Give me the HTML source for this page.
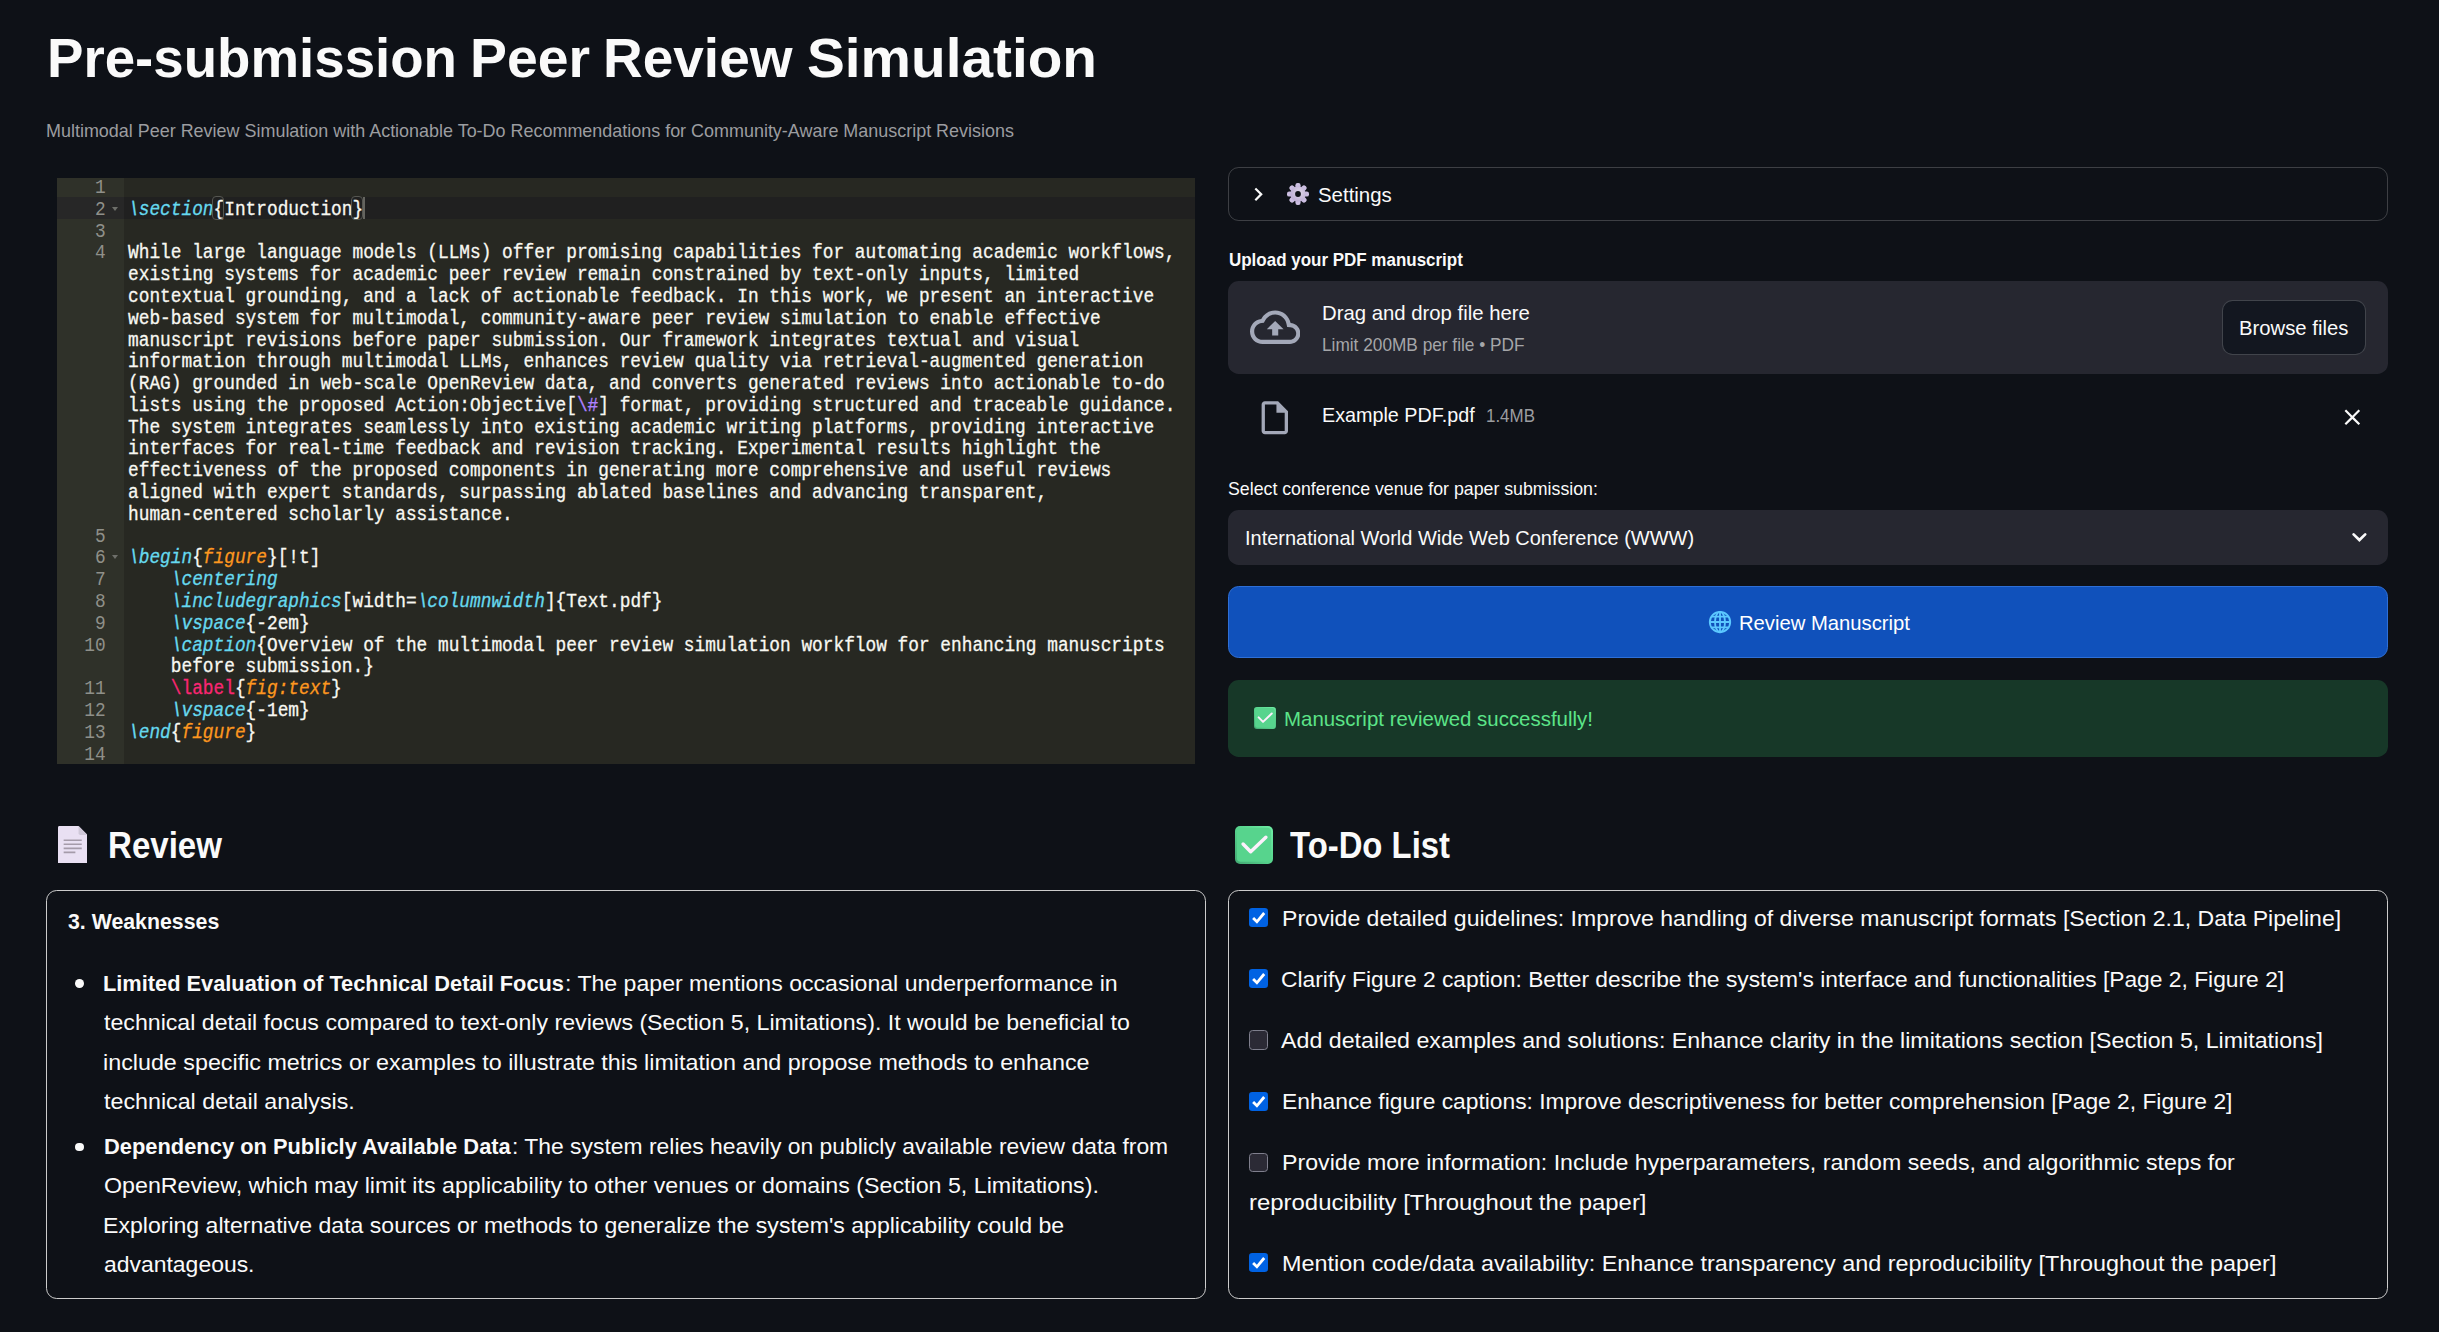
<!DOCTYPE html>
<html lang="en"><head><meta charset="utf-8"><title>Pre-submission Peer Review Simulation</title>
<style>
html,body{margin:0;padding:0;background:#0e1117;}
body{width:2439px;height:1332px;position:relative;overflow:hidden;font-family:"Liberation Sans",sans-serif;color:#fafafa;}
h1,h3,h4,p,ul,li,label,small,strong,header,main,section{margin:0;padding:0;font:inherit;list-style:none;display:block;}
.ab{position:absolute;display:block;}
.t{position:absolute;white-space:nowrap;transform-origin:0 50%;font-family:"Liberation Sans",sans-serif;}
.box{position:absolute;box-sizing:border-box;border-radius:10.67px;}
.ed{position:absolute;background:#272822;overflow:hidden;font-family:"Liberation Mono",monospace;font-size:19.6px;line-height:21.79px;color:#f8f8f2;}
.gut{position:absolute;left:0;top:0;bottom:0;background:#2f3129;}
.al{position:absolute;left:0;right:0;background:#202020;}
.alg{position:absolute;left:0;background:#272727;}
.ln{position:absolute;left:0;width:48.6px;text-align:right;color:#8f908a;transform-origin:100% 50%;transform:scaleX(0.9090);white-space:pre;}
.fold{position:absolute;left:54.8px;width:0;height:0;border-left:3.2px solid transparent;border-right:3.2px solid transparent;border-top:4.2px solid #6e6f6a;}
.code{position:absolute;top:0;width:1400px;height:100%;transform-origin:0 0;}
.cl{position:absolute;left:0;white-space:pre;-webkit-text-stroke:0.3px currentColor;}
.bs{display:inline-block;transform:skewX(-11deg);}
.bk{position:absolute;box-sizing:border-box;border:1.33px solid #555651;border-radius:4px;}
.cur{position:absolute;background:#64645f;}
.cb{position:absolute;box-sizing:border-box;width:19.2px;height:19.2px;border-radius:3.2px;}
.cb.on{background:#0062e3;}
.cb.on svg{display:block;}
.cb.off{background:#2b2a35;border:1.33px solid #7f7f8d;border-radius:3.6px;}
.bul{position:absolute;width:8.8px;height:8.8px;border-radius:50%;background:#fafafa;}
</style></head><body>
<header>
<h1><span class="t" style="left:46.75px;top:21.80px;font-size:55.6px;line-height:72.28px;font-weight:700;color:#fafafa;transform:scaleX(0.9830);">Pre-submission</span><span class="t" style="left:470.21px;top:21.80px;font-size:55.6px;line-height:72.28px;font-weight:700;color:#fafafa;transform:scaleX(0.9957);">Peer</span><span class="t" style="left:603.33px;top:21.80px;font-size:55.6px;line-height:72.28px;font-weight:700;color:#fafafa;transform:scaleX(0.9889);">Review</span><span class="t" style="left:806.78px;top:21.80px;font-size:55.6px;line-height:72.28px;font-weight:700;color:#fafafa;transform:scaleX(1.0204);">Simulation</span></h1>
<p class="t" style="left:45.90px;top:119.90px;font-size:17.9px;line-height:23.27px;font-weight:400;color:#9c9da0;transform:scaleX(1.0032);">Multimodal Peer Review Simulation with Actionable To-Do Recommendations for Community-Aware Manuscript Revisions</p>
</header>
<main>
<section class="editor">
<div class="ed" style="left:57px;top:178px;width:1138px;height:586px">
<div class="gut" style="width:67px"></div>
<div class="al" style="top:19.29px;height:21.79px"></div>
<div class="alg" style="top:19.29px;height:21.79px;width:67px"></div>
<div class="ln" style="top:0.00px">1</div>
<div class="ln" style="top:21.79px">2</div>
<div class="ln" style="top:43.58px">3</div>
<div class="ln" style="top:65.37px">4</div>
<div class="ln" style="top:348.64px">5</div>
<div class="ln" style="top:370.43px">6</div>
<div class="ln" style="top:392.22px">7</div>
<div class="ln" style="top:414.01px">8</div>
<div class="ln" style="top:435.80px">9</div>
<div class="ln" style="top:457.59px">10</div>
<div class="ln" style="top:501.17px">11</div>
<div class="ln" style="top:522.96px">12</div>
<div class="ln" style="top:544.75px">13</div>
<div class="ln" style="top:566.54px">14</div>
<div class="fold" style="top:28.78px"></div>
<div class="fold" style="top:377.43px"></div>
<div class="code" style="left:71.30000000000001px;transform:scaleX(0.9090)">
<div class="cl" style="top:21.79px"><i style="color:#66d9ef"><span class="bs">\</span>section</i>{Introduction}</div>
<div class="cl" style="top:65.37px">While large language models (LLMs) offer promising capabilities for automating academic workflows,</div>
<div class="cl" style="top:87.16px">existing systems for academic peer review remain constrained by text-only inputs, limited</div>
<div class="cl" style="top:108.95px">contextual grounding, and a lack of actionable feedback. In this work, we present an interactive</div>
<div class="cl" style="top:130.74px">web-based system for multimodal, community-aware peer review simulation to enable effective</div>
<div class="cl" style="top:152.53px">manuscript revisions before paper submission. Our framework integrates textual and visual</div>
<div class="cl" style="top:174.32px">information through multimodal LLMs, enhances review quality via retrieval-augmented generation</div>
<div class="cl" style="top:196.11px">(RAG) grounded in web-scale OpenReview data, and converts generated reviews into actionable to-do</div>
<div class="cl" style="top:217.90px">lists using the proposed Action:Objective[<span style="color:#ae81ff">\#</span>] format, providing structured and traceable guidance.</div>
<div class="cl" style="top:239.69px">The system integrates seamlessly into existing academic writing platforms, providing interactive</div>
<div class="cl" style="top:261.48px">interfaces for real-time feedback and revision tracking. Experimental results highlight the</div>
<div class="cl" style="top:283.27px">effectiveness of the proposed components in generating more comprehensive and useful reviews</div>
<div class="cl" style="top:305.06px">aligned with expert standards, surpassing ablated baselines and advancing transparent,</div>
<div class="cl" style="top:326.85px">human-centered scholarly assistance.</div>
<div class="cl" style="top:370.43px"><i style="color:#66d9ef"><span class="bs">\</span>begin</i>{<i style="color:#fd971f">figure</i>}[!t]</div>
<div class="cl" style="top:392.22px">    <i style="color:#66d9ef"><span class="bs">\</span>centering</i></div>
<div class="cl" style="top:414.01px">    <i style="color:#66d9ef"><span class="bs">\</span>includegraphics</i>[width=<i style="color:#66d9ef"><span class="bs">\</span>columnwidth</i>]{Text.pdf}</div>
<div class="cl" style="top:435.80px">    <i style="color:#66d9ef"><span class="bs">\</span>vspace</i>{-2em}</div>
<div class="cl" style="top:457.59px">    <i style="color:#66d9ef"><span class="bs">\</span>caption</i>{Overview of the multimodal peer review simulation workflow for enhancing manuscripts</div>
<div class="cl" style="top:479.38px">    before submission.}</div>
<div class="cl" style="top:501.17px">    <span style="color:#f92672">\label</span>{<i style="color:#fd971f">fig:text</i>}</div>
<div class="cl" style="top:522.96px">    <i style="color:#66d9ef"><span class="bs">\</span>vspace</i>{-1em}</div>
<div class="cl" style="top:544.75px"><i style="color:#66d9ef"><span class="bs">\</span>end</i>{<i style="color:#fd971f">figure</i>}</div>
</div>
<div class="bk" style="left:155.22px;top:18.20px;width:11.7px;height:23.9px"></div>
<div class="bk" style="left:294.19px;top:18.20px;width:11.7px;height:23.9px"></div>
<div class="cur" style="left:306.10px;top:19.20px;width:1.5px;height:21.5px"></div>
</div>
</section>
<section class="controls">
<div class="expander"><div class="box" style="left:1228px;top:167px;width:1160px;height:54px;border:1.33px solid rgba(250,250,250,0.2)"></div><svg class="ab" style="left:1245.03px;top:181.37px" width="26.67" height="26.67" viewBox="0 0 24 24" ><path d="M10 6L8.59 7.41 13.17 12l-4.58 4.59L10 18l6-6z" fill="#fafafa"/></svg><svg class="ab" style="left:1286.10px;top:182.30px" width="24.00" height="24.00" viewBox="0 0 24 24" ><defs><linearGradient id="gg" x1="0" y1="0" x2="0" y2="1"><stop offset="0" stop-color="#d0c4e4"/><stop offset="1" stop-color="#bfaedb"/></linearGradient><radialGradient id="gr" cx="0.6" cy="0.4" r="0.7"><stop offset="0" stop-color="#ddd5e8"/><stop offset="1" stop-color="#b9a9d2"/></radialGradient></defs><g transform="translate(12,12)"><rect x="-2.6" y="-11" width="5.2" height="7" rx="2.2" transform="rotate(0)" fill="url(#gg)"/><rect x="-2.6" y="-11" width="5.2" height="7" rx="2.2" transform="rotate(45)" fill="url(#gg)"/><rect x="-2.6" y="-11" width="5.2" height="7" rx="2.2" transform="rotate(90)" fill="url(#gg)"/><rect x="-2.6" y="-11" width="5.2" height="7" rx="2.2" transform="rotate(135)" fill="url(#gg)"/><rect x="-2.6" y="-11" width="5.2" height="7" rx="2.2" transform="rotate(180)" fill="url(#gg)"/><rect x="-2.6" y="-11" width="5.2" height="7" rx="2.2" transform="rotate(225)" fill="url(#gg)"/><rect x="-2.6" y="-11" width="5.2" height="7" rx="2.2" transform="rotate(270)" fill="url(#gg)"/><rect x="-2.6" y="-11" width="5.2" height="7" rx="2.2" transform="rotate(315)" fill="url(#gg)"/><circle r="7.6" fill="url(#gr)"/><circle r="2.9" fill="#0e1117"/></g></svg><span class="t" style="left:1317.70px;top:182.10px;font-size:20.4px;line-height:26.52px;font-weight:400;color:#fafafa;transform:scaleX(1.0014);">Settings</span></div>
<div class="uploader"><label class="t" style="left:1228.50px;top:249.00px;font-size:17.9px;line-height:23.27px;font-weight:700;color:#fafafa;transform:scaleX(0.9486);">Upload your PDF manuscript</label><div class="box" style="left:1228px;top:280.7px;width:1160px;height:93px;background:#262730"></div><svg class="ab" style="left:1249.90px;top:301.65px" width="50.40" height="50.40" viewBox="0 0 24 24" ><path fill="#a3a8b8" d="M19.35 10.04C18.67 6.59 15.64 4 12 4 9.11 4 6.6 5.64 5.35 8.04 2.34 8.36 0 10.91 0 14c0 3.31 2.69 6 6 6h13c2.76 0 5-2.24 5-5 0-2.64-2.05-4.78-4.65-4.96zM19 18H6c-2.21 0-4-1.79-4-4 0-2.05 1.53-3.76 3.56-3.97l1.07-.11.5-.95C8.08 7.14 9.94 6 12 6c2.62 0 4.88 1.86 5.39 4.43l.3 1.5 1.53.11c1.56.1 2.78 1.41 2.78 2.96 0 1.65-1.35 3-3 3zM8 13h2.55v3h2.9v-3H16l-4-4z"/></svg><span class="t" style="left:1321.70px;top:300.20px;font-size:20.4px;line-height:26.52px;font-weight:400;color:#fafafa;transform:scaleX(0.9966);">Drag and drop file here</span><small class="t" style="left:1321.74px;top:333.90px;font-size:17.9px;line-height:23.27px;font-weight:400;color:#a5a6a9;transform:scaleX(0.9641);">Limit 200MB per file &bull; PDF</small><div class="box" style="left:2222.3px;top:300.3px;width:143.5px;height:55px;background:#131720;border:1.33px solid rgba(250,250,250,0.2)"></div><span class="t" style="left:2239.01px;top:315.20px;font-size:20.4px;line-height:26.52px;font-weight:400;color:#fafafa;transform:scaleX(0.9945);">Browse files</span>
<div class="file"><svg class="ab" style="left:1254.95px;top:397.60px" width="39.60" height="39.60" viewBox="0 0 24 24" ><path fill="#a3a8b8" d="M14 2H6c-1.1 0-1.99.9-1.99 2L4 20c0 1.1.89 2 1.99 2H18c1.1 0 2-.9 2-2V8l-6-6zM6 20V4h7v5h5v11H6z"/></svg><span class="t" style="left:1321.73px;top:402.00px;font-size:20.4px;line-height:26.52px;font-weight:400;color:#fafafa;transform:scaleX(0.9688);">Example PDF.pdf</span><small class="t" style="left:1486.05px;top:405.00px;font-size:17.9px;line-height:23.27px;font-weight:400;color:#9c9da0;transform:scaleX(0.9460);">1.4MB</small><svg class="ab" style="left:2339.36px;top:404.37px" width="26.67" height="26.67" viewBox="0 0 24 24" ><path fill="#fafafa" d="M19 6.41L17.59 5 12 10.59 6.41 5 5 6.41 10.59 12 5 17.59 6.41 19 12 13.41 17.59 19 19 17.59 13.41 12z"/></svg></div></div>
<div class="select"><label class="t" style="left:1228.30px;top:478.30px;font-size:17.9px;line-height:23.27px;font-weight:400;color:#fafafa;transform:scaleX(0.9919);">Select conference venue for paper submission:</label><div class="box" style="left:1228px;top:510px;width:1160px;height:55px;background:#262730"></div><span class="t" style="left:1244.82px;top:525.00px;font-size:20.4px;line-height:26.52px;font-weight:400;color:#fafafa;transform:scaleX(0.9801);">International World Wide Web Conference (WWW)</span><svg class="ab" style="left:2345.00px;top:525.00px" width="30.00" height="24.00" viewBox="0 0 30 24" ><path d="M8.6 9.4L14.4 15L20.2 9.4" fill="none" stroke="#fafafa" stroke-width="2.7" stroke-linecap="round" stroke-linejoin="miter"/></svg></div>
<div class="primary"><div class="box" style="left:1228px;top:586px;width:1160px;height:72px;background:#1051bb;border:1.33px solid #2e6fd6"></div><svg class="ab" style="left:1707.50px;top:610.00px" width="24.00" height="24.00" viewBox="0 0 24 24" ><g fill="none" stroke="#5cc8ff" stroke-width="1.85"><circle cx="12" cy="12" r="10.2"/><ellipse cx="12" cy="12" rx="5" ry="10.2"/><path d="M12 1.8V22.2M1.8 12H22.2M3.6 6.6H20.4M3.6 17.4H20.4"/></g></svg><span class="t" style="left:1739.21px;top:610.00px;font-size:20.4px;line-height:26.52px;font-weight:400;color:#ffffff;transform:scaleX(0.9924);">Review Manuscript</span></div>
<div class="alert"><div class="box" style="left:1228px;top:680px;width:1160px;height:76.8px;background:#173828"></div><svg class="ab" style="left:1254.05px;top:707.45px" width="21.90" height="21.90" viewBox="0 0 32 32" ><defs><linearGradient id="g1" x1="1" y1="0" x2="0" y2="1"><stop offset="0" stop-color="#70eea6"/><stop offset="0.5" stop-color="#57d48d"/><stop offset="1" stop-color="#43a873"/></linearGradient></defs><rect x="0" y="0" width="32" height="32" rx="4.2" fill="url(#g1)"/><rect x="1.6" y="1.4" width="28.8" height="28.8" rx="3.2" fill="#57d48d"/><path d="M6.8 15.2L13.2 21.7L26 9.5" fill="none" stroke="#fcf0fc" stroke-width="2.9" stroke-linecap="round" stroke-linejoin="round"/></svg><span class="t" style="left:1284.20px;top:706.20px;font-size:20.4px;line-height:26.52px;font-weight:400;color:#5ce488;transform:scaleX(1.0023);">Manuscript reviewed successfully!</span></div>
</section>
<section class="review">
<h3><svg class="ab" style="left:57.50px;top:825.65px" width="29.60" height="37.70" viewBox="0 0 29.8 37.9" preserveAspectRatio="none"><path d="M1.5 0H20.7L29.8 9.1V36.4a1.5 1.5 0 0 1-1.5 1.5H1.5a1.5 1.5 0 0 1-1.5-1.5V1.5a1.5 1.5 0 0 1 1.5-1.5z" fill="#e9e0f3"/><path d="M20.7 0V7.3a1.8 1.8 0 0 0 1.8 1.8H29.8z" fill="#cfc8d9"/><path d="M5.7 14.4H23.9M5.7 18.4H23.9M5.7 22.5H23.9M5.7 26.5H17.5" stroke="#a59baa" stroke-width="1.6" fill="none"/></svg><span class="t" style="left:107.99px;top:821.80px;font-size:36.6px;line-height:47.58px;font-weight:700;color:#fafafa;transform:scaleX(0.9040);">Review</span></h3>
<div class="box" style="left:46px;top:890px;width:1160px;height:409px;border:1.33px solid #cccccc"></div>
<h4><span class="t" style="left:67.80px;top:908.80px;font-size:21.4px;line-height:27.82px;font-weight:700;color:#fafafa;transform:scaleX(0.9961);">3. Weaknesses</span></h4>
<ul>
<li><div class="bul" style="left:75.2px;top:979.1px"></div><strong class="t" style="left:103.44px;top:968.80px;font-size:22.8px;line-height:29.64px;font-weight:700;color:#fafafa;transform:scaleX(0.9559);">Limited Evaluation of Technical Detail Focus</strong><span class="t" style="left:564.89px;top:968.80px;font-size:22.8px;line-height:29.64px;font-weight:400;color:#fafafa;transform:scaleX(1.0127);">: The paper mentions occasional underperformance in</span><span class="t" style="left:104.10px;top:1007.90px;font-size:22.8px;line-height:29.64px;font-weight:400;color:#fafafa;transform:scaleX(1.0157);">technical detail focus compared to text-only reviews (Section 5, Limitations). It would be beneficial to</span><span class="t" style="left:103.38px;top:1047.80px;font-size:22.8px;line-height:29.64px;font-weight:400;color:#fafafa;transform:scaleX(1.0217);">include specific metrics or examples to illustrate this limitation and propose methods to enhance</span><span class="t" style="left:104.10px;top:1086.50px;font-size:22.8px;line-height:29.64px;font-weight:400;color:#fafafa;transform:scaleX(1.0201);">technical detail analysis.</span></li>
<li><div class="bul" style="left:75.2px;top:1142.6px"></div><strong class="t" style="left:103.54px;top:1131.70px;font-size:22.8px;line-height:29.64px;font-weight:700;color:#fafafa;transform:scaleX(0.9594);">Dependency on Publicly Available Data</strong><span class="t" style="left:512.20px;top:1131.70px;font-size:22.8px;line-height:29.64px;font-weight:400;color:#fafafa;transform:scaleX(1.0043);">: The system relies heavily on publicly available review data from</span><span class="t" style="left:104.10px;top:1171.00px;font-size:22.8px;line-height:29.64px;font-weight:400;color:#fafafa;transform:scaleX(1.0184);">OpenReview, which may limit its applicability to other venues or domains (Section 5, Limitations).</span><span class="t" style="left:103.49px;top:1210.80px;font-size:22.8px;line-height:29.64px;font-weight:400;color:#fafafa;transform:scaleX(1.0121);">Exploring alternative data sources or methods to generalize the system's applicability could be</span><span class="t" style="left:104.10px;top:1249.60px;font-size:22.8px;line-height:29.64px;font-weight:400;color:#fafafa;transform:scaleX(1.0061);">advantageous.</span></li>
</ul>
</section>
<section class="todo">
<h3><svg class="ab" style="left:1235.10px;top:825.70px" width="38.00" height="38.00" viewBox="0 0 32 32" ><defs><linearGradient id="g2" x1="1" y1="0" x2="0" y2="1"><stop offset="0" stop-color="#70eea6"/><stop offset="0.5" stop-color="#57d48d"/><stop offset="1" stop-color="#43a873"/></linearGradient></defs><rect x="0" y="0" width="32" height="32" rx="4.2" fill="url(#g2)"/><rect x="1.6" y="1.4" width="28.8" height="28.8" rx="3.2" fill="#57d48d"/><path d="M6.8 15.2L13.2 21.7L26 9.5" fill="none" stroke="#fcf0fc" stroke-width="2.9" stroke-linecap="round" stroke-linejoin="round"/></svg><span class="t" style="left:1289.60px;top:821.80px;font-size:36.6px;line-height:47.58px;font-weight:700;color:#fafafa;transform:scaleX(0.8983);">To-Do List</span></h3>
<div class="box" style="left:1228px;top:890px;width:1160px;height:409px;border:1.33px solid #cccccc"></div>
<ul>
<li><label><div class="cb on" style="left:1249px;top:908.2px"><svg width="19.2" height="19.2" viewBox="0 0 19.2 19.2"><path d="M4.1 10.1L7.9 13.8L15.2 5.0" fill="none" stroke="#fff" stroke-width="2.8" stroke-linecap="butt" stroke-linejoin="miter"/></svg></div><span class="t" style="left:1281.89px;top:903.80px;font-size:22.8px;line-height:29.64px;font-weight:400;color:#fafafa;transform:scaleX(1.0119);">Provide detailed guidelines: Improve handling of diverse manuscript formats [Section 2.1, Data Pipeline]</span></label></li>
<li><label><div class="cb on" style="left:1249px;top:969.2px"><svg width="19.2" height="19.2" viewBox="0 0 19.2 19.2"><path d="M4.1 10.1L7.9 13.8L15.2 5.0" fill="none" stroke="#fff" stroke-width="2.8" stroke-linecap="butt" stroke-linejoin="miter"/></svg></div><span class="t" style="left:1281.00px;top:964.90px;font-size:22.8px;line-height:29.64px;font-weight:400;color:#fafafa;transform:scaleX(1.0003);">Clarify Figure 2 caption: Better describe the system's interface and functionalities [Page 2, Figure 2]</span></label></li>
<li><label><div class="cb off" style="left:1249px;top:1030.4px"></div><span class="t" style="left:1281.40px;top:1025.90px;font-size:22.8px;line-height:29.64px;font-weight:400;color:#fafafa;transform:scaleX(1.0177);">Add detailed examples and solutions: Enhance clarity in the limitations section [Section 5, Limitations]</span></label></li>
<li><label><div class="cb on" style="left:1249px;top:1091.5px"><svg width="19.2" height="19.2" viewBox="0 0 19.2 19.2"><path d="M4.1 10.1L7.9 13.8L15.2 5.0" fill="none" stroke="#fff" stroke-width="2.8" stroke-linecap="butt" stroke-linejoin="miter"/></svg></div><span class="t" style="left:1282.00px;top:1086.80px;font-size:22.8px;line-height:29.64px;font-weight:400;color:#fafafa;">Enhance figure captions: Improve descriptiveness for better comprehension [Page 2, Figure 2]</span></label></li>
<li><label><div class="cb off" style="left:1249px;top:1152.7px"></div><span class="t" style="left:1281.88px;top:1147.80px;font-size:22.8px;line-height:29.64px;font-weight:400;color:#fafafa;transform:scaleX(1.0161);">Provide more information: Include hyperparameters, random seeds, and algorithmic steps for</span><span class="t" style="left:1248.75px;top:1188.00px;font-size:22.8px;line-height:29.64px;font-weight:400;color:#fafafa;transform:scaleX(1.0491);">reproducibility [Throughout the paper]</span></label></li>
<li><label><div class="cb on" style="left:1249px;top:1253.1px"><svg width="19.2" height="19.2" viewBox="0 0 19.2 19.2"><path d="M4.1 10.1L7.9 13.8L15.2 5.0" fill="none" stroke="#fff" stroke-width="2.8" stroke-linecap="butt" stroke-linejoin="miter"/></svg></div><span class="t" style="left:1281.87px;top:1249.00px;font-size:22.8px;line-height:29.64px;font-weight:400;color:#fafafa;transform:scaleX(1.0257);">Mention code/data availability: Enhance transparency and reproducibility [Throughout the paper]</span></label></li>
</ul>
</section>
</main>
</body></html>
